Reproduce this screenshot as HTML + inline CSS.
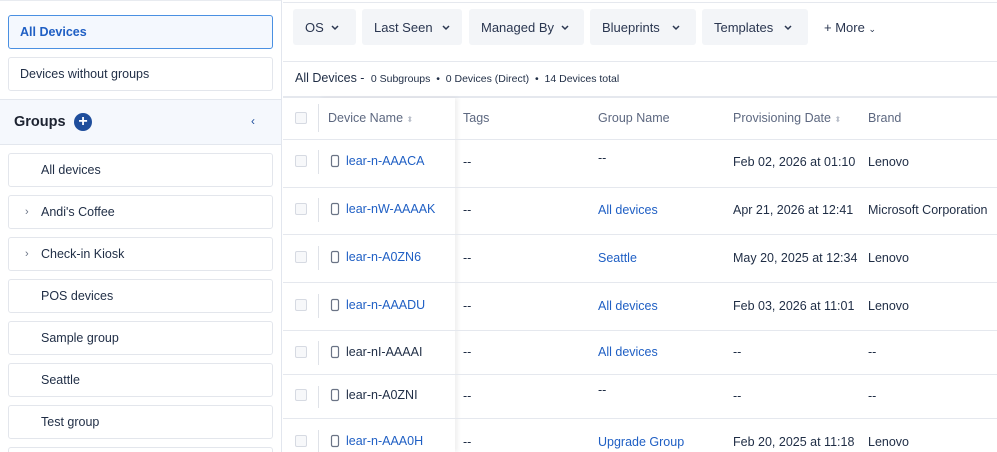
<!DOCTYPE html>
<html style="overflow:hidden;width:997px;height:452px"><head><meta charset="utf-8"><style>
*{box-sizing:border-box;margin:0;padding:0}
body{width:997px;height:452px;overflow:hidden;background:#fff;font-family:"Liberation Sans",sans-serif;color:#1f2d45;position:relative;font-size:13px}
.a{position:absolute}
.left{left:0;top:0;width:282px;height:452px;border-right:1px solid #e2e6ee;border-top:1px solid #e8ebf0;background:#fff;overflow:hidden}
.item{position:absolute;left:8px;width:265px;height:34px;border:1px solid #e3e6ec;border-radius:3px;background:#fff;font-size:12.5px;line-height:32px;padding-left:11px;color:#1f2d45}
.g{padding-left:32px}
.chev{position:absolute;left:16px;top:0;font-size:11px;color:#6b7486}
.btn{position:absolute;top:9px;height:36px;background:#f3f5f8;border-radius:3px;font-size:13px;line-height:38px;padding-left:12px;color:#2a3650}
.btn svg{position:absolute;top:16px}
.hd{position:absolute;top:111px;font-size:12.5px;color:#5d6880}
.cb{position:absolute;left:295px;width:12px;height:12px;border:1px solid #d6dae2;border-radius:2px;background:#f7f8fa}
.t{position:absolute;font-size:12.5px;white-space:nowrap}
.lk{color:#1f5fc4}
.hl{position:absolute;left:283px;width:714px;height:1px;background:#e5e8ee}
</style></head><body>
<div class="a left">
 <div class="item" style="top:14px;background:#f4f8fe;border-color:#4a90e2;color:#1f5fc4;font-weight:bold">All Devices</div>
 <div class="item" style="top:56px">Devices without groups</div>
 <div class="a" style="left:0;top:98px;width:281px;height:46px;background:#f5f8fd;border-top:1px solid #e3e7ee;border-bottom:1px solid #e3e7ee"></div>
 <div class="a" style="left:14px;top:113px;font-size:14.5px;font-weight:bold;color:#1c2230">Groups</div>
 <div class="a" style="left:74px;top:112px;width:18px;height:18px;border-radius:50%;background:#1f4e9c;color:#fff;text-align:center;line-height:18px;font-size:16px;font-weight:bold">+</div>
 <div class="a" style="left:251px;top:113px;font-size:12px;color:#1f4e9c">‹</div>
 <div class="item g" style="top:152px">All devices</div>
 <div class="item g" style="top:194px"><span class="chev">›</span>Andi's Coffee</div>
 <div class="item g" style="top:236px"><span class="chev">›</span>Check-in Kiosk</div>
 <div class="item g" style="top:278px">POS devices</div>
 <div class="item g" style="top:320px">Sample group</div>
 <div class="item g" style="top:362px">Seattle</div>
 <div class="item g" style="top:404px">Test group</div>
 <div class="item g" style="top:446px;height:6px;border-bottom:none;border-radius:3px 3px 0 0"></div>
</div>
<div class="hl" style="top:2px"></div>
<div class="btn" style="left:293px;width:63px">OS<svg style="left:38px" width="8" height="6"><path d="M1 1l3 3 3-3" stroke="#2a3650" stroke-width="1.5" fill="none"/></svg></div>
<div class="btn" style="left:362px;width:100px">Last Seen<svg style="left:80px" width="8" height="6"><path d="M1 1l3 3 3-3" stroke="#2a3650" stroke-width="1.5" fill="none"/></svg></div>
<div class="btn" style="left:469px;width:115px">Managed By<svg style="left:92px" width="8" height="6"><path d="M1 1l3 3 3-3" stroke="#2a3650" stroke-width="1.5" fill="none"/></svg></div>
<div class="btn" style="left:590px;width:106px">Blueprints<svg style="left:82px" width="8" height="6"><path d="M1 1l3 3 3-3" stroke="#2a3650" stroke-width="1.5" fill="none"/></svg></div>
<div class="btn" style="left:702px;width:106px">Templates<svg style="left:82px" width="8" height="6"><path d="M1 1l3 3 3-3" stroke="#2a3650" stroke-width="1.5" fill="none"/></svg></div>
<div class="t" style="left:824px;top:20px;font-size:13px;color:#2a3650">+ More <span style="font-size:9px">⌄</span></div>
<div class="hl" style="top:61px"></div>
<div class="t" style="left:295px;top:71px;font-size:12.5px;color:#1f2d45">All Devices - <span style="font-size:10.5px">&nbsp;0 Subgroups &nbsp;•&nbsp; 0 Devices (Direct) &nbsp;•&nbsp; 14 Devices total</span></div>
<div class="hl" style="top:96px;height:2px"></div>
<div class="a" style="left:318px;top:98px;width:137px;height:354px;box-shadow:3px 0 4px rgba(0,0,0,0.06);background:#fff"></div>
<div class="cb" style="top:112px"></div>
<div class="a" style="left:318px;top:104px;width:1px;height:28px;background:#dfe2e8"></div>
<div class="hd" style="left:328px">Device Name <span style="font-size:8px;color:#b8bec9">⬍</span></div>
<div class="hd" style="left:463px">Tags</div>
<div class="hd" style="left:598px">Group Name</div>
<div class="hd" style="left:733px">Provisioning Date <span style="font-size:8px;color:#b8bec9">⬍</span></div>
<div class="hd" style="left:868px">Brand</div>
<div class="hl" style="top:139px"></div>
<div class="hl" style="top:187px"></div>
<div class="hl" style="top:234px"></div>
<div class="hl" style="top:282px"></div>
<div class="hl" style="top:330px"></div>
<div class="hl" style="top:374px"></div>
<div class="hl" style="top:418px"></div>

<div class="cb" style="top:155px"></div><div class="cb" style="top:203px"></div><div class="cb" style="top:251px"></div><div class="cb" style="top:299px"></div><div class="cb" style="top:346px"></div><div class="cb" style="top:389px"></div><div class="cb" style="top:435px"></div>

<svg class="a" style="left:318px;top:0" width="30" height="452">
 <g stroke="#dfe2e8"><line x1="0.5" y1="150" x2="0.5" y2="174"/><line x1="0.5" y1="198" x2="0.5" y2="222"/><line x1="0.5" y1="246" x2="0.5" y2="270"/><line x1="0.5" y1="294" x2="0.5" y2="318"/><line x1="0.5" y1="341" x2="0.5" y2="365"/><line x1="0.5" y1="386" x2="0.5" y2="408"/><line x1="0.5" y1="430" x2="0.5" y2="452"/></g>
 <g fill="none" stroke="#6b7486" stroke-width="1.2">
 <rect x="13.5" y="155.5" width="7" height="11" rx="1.5"/><rect x="13.5" y="203.5" width="7" height="11" rx="1.5"/><rect x="13.5" y="251.5" width="7" height="11" rx="1.5"/><rect x="13.5" y="299.5" width="7" height="11" rx="1.5"/><rect x="13.5" y="346.5" width="7" height="11" rx="1.5"/><rect x="13.5" y="389.5" width="7" height="11" rx="1.5"/><rect x="13.5" y="435.5" width="7" height="11" rx="1.5"/>
 </g>
</svg>
<div class="t lk" style="left:346px;top:154px">lear-n-AAACA</div>
<div class="t lk" style="left:346px;top:202px">lear-nW-AAAAK</div>
<div class="t lk" style="left:346px;top:250px">lear-n-A0ZN6</div>
<div class="t lk" style="left:346px;top:298px">lear-n-AAADU</div>
<div class="t" style="left:346px;top:345px">lear-nI-AAAAI</div>
<div class="t" style="left:346px;top:388px">lear-n-A0ZNI</div>
<div class="t lk" style="left:346px;top:434px">lear-n-AAA0H</div>

<div class="t" style="left:463px;top:155px">--</div>
<div class="t" style="left:463px;top:203px">--</div>
<div class="t" style="left:463px;top:251px">--</div>
<div class="t" style="left:463px;top:299px">--</div>
<div class="t" style="left:463px;top:345px">--</div>
<div class="t" style="left:463px;top:389px">--</div>
<div class="t" style="left:463px;top:435px">--</div>

<div class="t" style="left:598px;top:151px">--</div>
<div class="t lk" style="left:598px;top:203px">All devices</div>
<div class="t lk" style="left:598px;top:251px">Seattle</div>
<div class="t lk" style="left:598px;top:299px">All devices</div>
<div class="t lk" style="left:598px;top:345px">All devices</div>
<div class="t" style="left:598px;top:383px">--</div>
<div class="t lk" style="left:598px;top:435px">Upgrade Group</div>

<div class="t" style="left:733px;top:155px;width:127px;overflow:hidden">Feb 02, 2026 at 01:10</div>
<div class="t" style="left:733px;top:203px;width:127px;overflow:hidden">Apr 21, 2026 at 12:41</div>
<div class="t" style="left:733px;top:251px;width:127px;overflow:hidden">May 20, 2025 at 12:34</div>
<div class="t" style="left:733px;top:299px;width:127px;overflow:hidden">Feb 03, 2026 at 11:01</div>
<div class="t" style="left:733px;top:345px">--</div>
<div class="t" style="left:733px;top:389px">--</div>
<div class="t" style="left:733px;top:435px;width:127px;overflow:hidden">Feb 20, 2025 at 11:18</div>

<div class="t" style="left:868px;top:155px">Lenovo</div>
<div class="t" style="left:868px;top:203px">Microsoft Corporation</div>
<div class="t" style="left:868px;top:251px">Lenovo</div>
<div class="t" style="left:868px;top:299px">Lenovo</div>
<div class="t" style="left:868px;top:345px">--</div>
<div class="t" style="left:868px;top:389px">--</div>
<div class="t" style="left:868px;top:435px">Lenovo</div>
</body></html>
